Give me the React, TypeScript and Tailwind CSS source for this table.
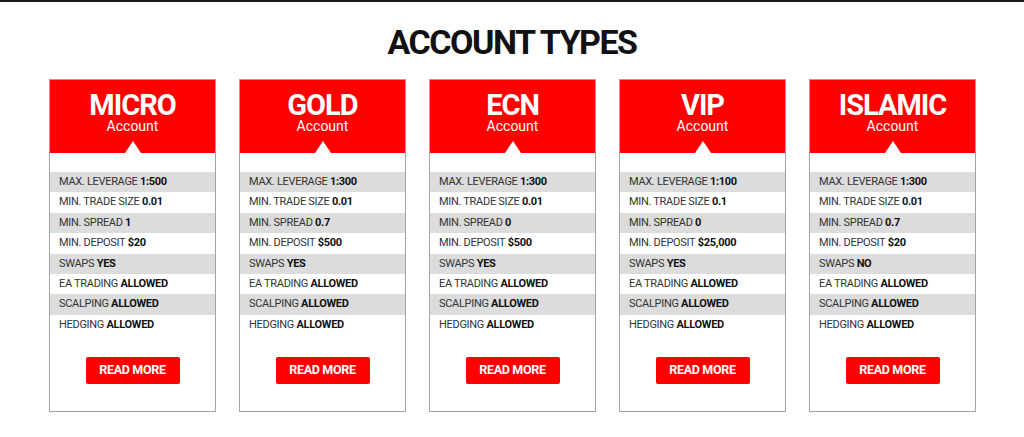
import React from "react";

type Account = {
  name: string;
  leverage: string;
  tradeSize: string;
  spread: string;
  deposit: string;
  swaps: string;
};

const accounts: Account[] = [
  { name: "MICRO", leverage: "1:500", tradeSize: "0.01", spread: "1", deposit: "$20", swaps: "YES" },
  { name: "GOLD", leverage: "1:300", tradeSize: "0.01", spread: "0.7", deposit: "$500", swaps: "YES" },
  { name: "ECN", leverage: "1:300", tradeSize: "0.01", spread: "0", deposit: "$500", swaps: "YES" },
  { name: "VIP", leverage: "1:100", tradeSize: "0.1", spread: "0", deposit: "$25,000", swaps: "YES" },
  { name: "ISLAMIC", leverage: "1:300", tradeSize: "0.01", spread: "0.7", deposit: "$20", swaps: "NO" },
];

function AccountCard({ account }: { account: Account }) {
  const rows = [
    ["MAX. LEVERAGE", account.leverage],
    ["MIN. TRADE SIZE", account.tradeSize],
    ["MIN. SPREAD", account.spread],
    ["MIN. DEPOSIT", account.deposit],
    ["SWAPS", account.swaps],
    ["EA TRADING", "ALLOWED"],
    ["SCALPING", "ALLOWED"],
    ["HEDGING", "ALLOWED"],
  ];

  return (
    <div className="w-[167px] h-[333px] border border-[#a3a3a3] bg-white flex flex-col">
      {/* header */}
      <div className="relative h-[73px] bg-[#ff0000] flex flex-col items-center pt-[13px] text-white">
        <div className="text-[29px] leading-[25px] font-bold tracking-[-1px]">{account.name}</div>
        <div className="text-[14px] leading-[16px] font-normal">Account</div>
        <div className="absolute bottom-0 left-1/2 -translate-x-1/2 w-0 h-0 border-l-[8px] border-r-[8px] border-b-[12px] border-l-transparent border-r-transparent border-b-white" />
      </div>

      {/* features */}
      <div className="mt-[19px] flex flex-col">
        {rows.map(([label, value], i) => (
          <div
            key={label}
            className={`h-[20.4px] flex items-center pl-[9px] text-[11px] tracking-[-0.3px] text-[#333] ${
              i % 2 === 0 ? "bg-[#dcdcdc]" : "bg-white"
            }`}
          >
            {label}&nbsp;<span className="font-bold text-[#111]">{value}</span>
          </div>
        ))}
      </div>

      <div className="flex justify-center mt-[22px]">
        <button className="w-[94px] h-[27px] bg-[#ff0000] rounded-[2px] text-white text-[12.5px] font-bold tracking-[-0.3px]">
          READ MORE
        </button>
      </div>
    </div>
  );
}

export default function App() {
  return (
    <div
      className="w-[1024px] h-[437px] bg-white border-t-2 border-[#1a1a1a] overflow-hidden"
      style={{ fontFamily: "Roboto, 'Noto Sans', sans-serif" }}
    >
      <h1 className="text-center text-[34px] leading-[40px] font-bold tracking-[-1.5px] text-[#111] mt-[20px]">
        ACCOUNT TYPES
      </h1>
      <div className="flex justify-center gap-[23px] mt-[17px] pl-[1px]">
        {accounts.map((a) => (
          <AccountCard key={a.name} account={a} />
        ))}
      </div>
    </div>
  );
}
